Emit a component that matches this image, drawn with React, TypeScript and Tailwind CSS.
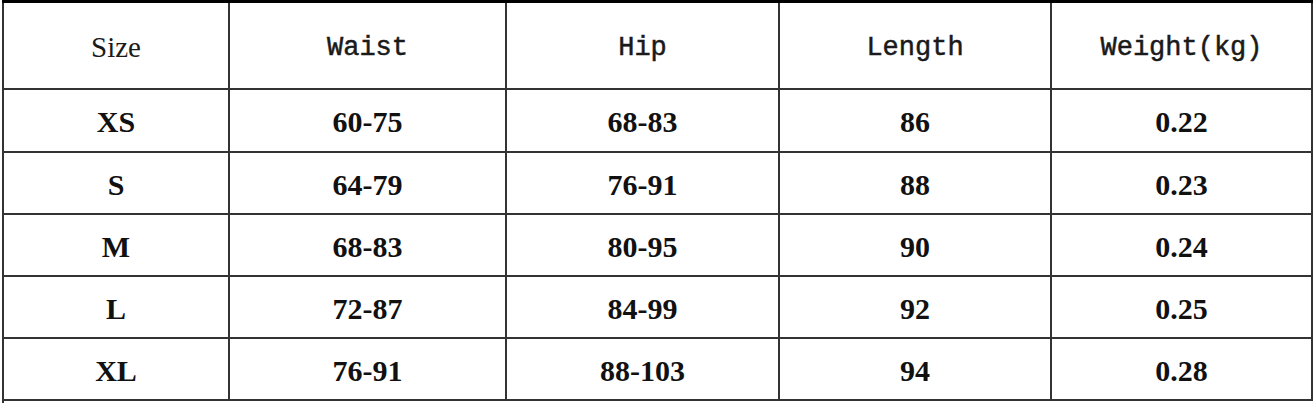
const rows = [
  { size: "XS", waist: "60-75", hip: "68-83", length: "86", weight: "0.22" },
  { size: "S", waist: "64-79", hip: "76-91", length: "88", weight: "0.23" },
  { size: "M", waist: "68-83", hip: "80-95", length: "90", weight: "0.24" },
  { size: "L", waist: "72-87", hip: "84-99", length: "92", weight: "0.25" },
  { size: "XL", waist: "76-91", hip: "88-103", length: "94", weight: "0.28" },
];

const mono =
  "font-['Liberation_Mono',monospace] text-[27px] text-[#1a1a1a] [-webkit-text-stroke:0.5px_#1a1a1a]";
const cell = "border-2 border-[#333] text-center align-middle p-0";
const head = "border-2 border-[#333] border-t-[3px] border-t-black text-center align-middle p-0 pt-[5px] font-normal";

export default function App() {
  return (
    <div className="w-[1314px] h-[403px] overflow-hidden bg-white pl-[2px]">
      <table className="table-fixed border-collapse w-[1309px] border-t-[3px] border-t-black font-['Liberation_Serif',serif]">
        <colgroup>
          <col className="w-[226px]" />
          <col className="w-[277px]" />
          <col className="w-[273px]" />
          <col className="w-[272px]" />
          <col className="w-[261px]" />
        </colgroup>
        <thead>
          <tr className="h-[87px]">
            <th className={`${head} text-[29px] text-[#1a1a1a]`}>Size</th>
            <th className={`${head} ${mono}`}>Waist</th>
            <th className={`${head} ${mono}`}>Hip</th>
            <th className={`${head} ${mono}`}>Length</th>
            <th className={`${head} ${mono}`}>Weight(kg)</th>
          </tr>
        </thead>
        <tbody className="font-bold text-[30px] text-[#111]">
          {rows.map((r, i) => (
            <tr key={r.size} className={i === 0 ? "h-[63px]" : "h-[62px]"}>
              <td className={`${cell} pt-[3px]`}>{r.size}</td>
              <td className={`${cell} pt-[3px]`}>{r.waist}</td>
              <td className={`${cell} pt-[3px]`}>{r.hip}</td>
              <td className={`${cell} pt-[3px]`}>{r.length}</td>
              <td className={`${cell} pt-[3px]`}>{r.weight}</td>
            </tr>
          ))}
          <tr className="h-[40px]">
            <td className="border-l-2 border-[#333] p-0" />
            <td colSpan={4} className="p-0" />
          </tr>
        </tbody>
      </table>
    </div>
  );
}
